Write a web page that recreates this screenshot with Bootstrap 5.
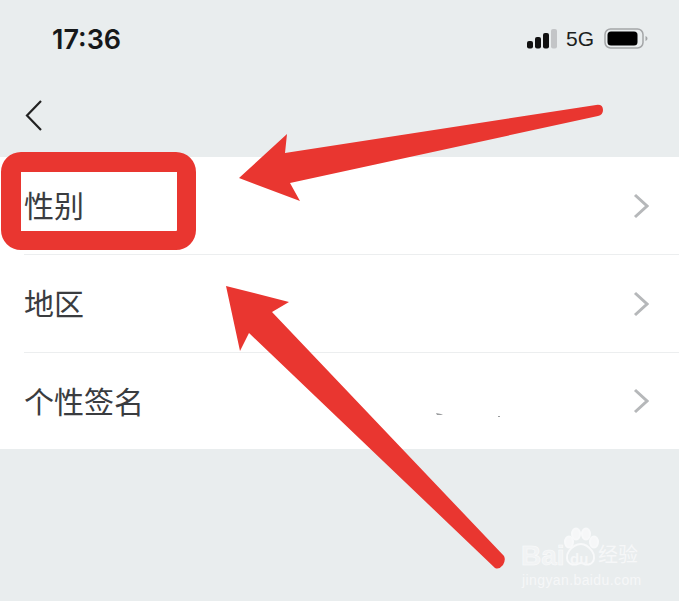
<!DOCTYPE html>
<html lang="zh-CN">

<head>
    <meta charset="UTF-8">
    <meta name="viewport" content="width=device-width, initial-scale=1.0">
    <title>个人信息</title>
    <link href="https://cdn.jsdelivr.net/npm/bootstrap@5.3.1/dist/css/bootstrap.min.css" rel="stylesheet">
    <style>
        body {
            margin: 0;
            background: #e9edee;
            overflow: hidden;
        }

        .phone-page {
            width: 679px;
            height: 601px;
            background: #e9edee;
        }

        .status-row {
            height: 72px;
            padding: 0 31px 0 52px;
        }

        .clock-text {
            font: 600 27px/1 Inter, "Liberation Sans", sans-serif;
            color: #16181a;
            margin-top: 6px;
        }

        .net-text {
            font: 400 21px/1 "Liberation Sans", sans-serif;
            color: #1c1e20;
            margin: 0 10px 0 9px;
        }

        .status-right {
            margin-top: 5px;
        }

        .back-row {
            height: 85px;
            padding-left: 24px;
        }

        .setting-row {
            padding-left: 24px;
            font: 400 30px/1 "Noto Sans CJK SC", sans-serif;
            color: #3a3c3f;
        }

        .setting-row + .setting-row .row-inner {
            border-top: 1px solid #eceeef;
        }

        .row-inner {
            height: 97px;
            padding-right: 30px;
        }

        .setting-row:nth-child(2) .row-inner {
            height: 98px;
        }

        .row-label {
            margin-top: -3px;
        }

        .mark-layer {
            position: absolute;
            left: 0;
            top: 0;
            pointer-events: none;
        }

        .red-box {
            position: absolute;
            left: 1px;
            top: 152px;
            width: 195px;
            height: 98px;
            border-style: solid;
            border-color: #e93630;
            border-width: 20px 19px 19px 20px;
            border-radius: 20px;
        }

        .red-box::before {
            content: "";
            position: absolute;
            inset: -1px;
            border: 1px solid #e93630;
        }

        .wm-box {
            position: absolute;
            left: 521px;
            top: 527px;
            width: 140px;
            line-height: 1;
            color: #f6f7f8;
        }

        .wm-bai {
            position: absolute;
            left: 0;
            top: 15px;
            font: 700 28px/1 "Liberation Sans", sans-serif;
            color: #f1f3f4;
            -webkit-text-stroke: .6px #fafbfb;
        }

        .wm-jy {
            position: absolute;
            left: 77px;
            top: 17px;
            font: 400 20px/1 "Noto Sans CJK SC", sans-serif;
        }

        .wm-url {
            position: absolute;
            left: 1px;
            top: 46px;
            font: 400 14px/1 "Liberation Sans", sans-serif;
            letter-spacing: .4px;
            white-space: nowrap;
        }

        .wm-du {
            position: absolute;
            left: 49px;
            top: 24px;
            font: 700 15px/1 "Liberation Sans", sans-serif;
            color: #f6f7f8;
        }
    </style>
</head>

<body>
    <div class="phone-page position-relative">
        <!-- barra de status -->
        <div class="status-row d-flex justify-content-between align-items-center">
            <span class="clock-text">17:36</span>
            <div class="status-right d-flex align-items-center">
                <svg width="30" height="20" viewBox="0 0 30 20">
                    <rect x="0" y="12" width="6" height="7.500" rx="2" fill="#111"/>
                    <rect x="8" y="8" width="6" height="11.500" rx="2" fill="#111"/>
                    <rect x="16" y="4" width="6" height="15.500" rx="2" fill="#111"/>
                    <rect x="24" y="0" width="6" height="19.500" rx="2" fill="#c3c5c7"/>
                </svg>
                <span class="net-text">5G</span>
                <svg width="44" height="22" viewBox="0 0 44 22">
                    <rect x="1" y="1" width="38" height="19" rx="5.500" fill="none" stroke="#a4a6a8" stroke-width="1.500"/>
                    <rect x="3.500" y="3.500" width="30" height="14" rx="3.500" fill="#000"/>
                    <path d="M41.500 8v5c1.200-.5 2-1.400 2-2.500s-.8-2-2-2.500z" fill="#a4a6a8"/>
                </svg>
            </div>
        </div>

        <div class="back-row d-flex align-items-center">
            <svg width="20" height="32" viewBox="0 0 20 32">
                <path d="M17 2 3 16.500 17 31" fill="none" stroke="#222" stroke-width="2.200"/>
            </svg>
        </div>

        <div class="bg-white">
            <div class="setting-row">
                <div class="row-inner d-flex justify-content-between align-items-center">
                    <span class="row-label">性别</span>
                    <svg width="16" height="26" viewBox="0 0 16 26"><path d="M2 2l12 11L2 24" fill="none" stroke="#b6b8ba" stroke-width="3"/></svg>
                </div>
            </div>
            <div class="setting-row">
                <div class="row-inner d-flex justify-content-between align-items-center">
                    <span class="row-label">地区</span>
                    <svg width="16" height="26" viewBox="0 0 16 26"><path d="M2 2l12 11L2 24" fill="none" stroke="#b6b8ba" stroke-width="3"/></svg>
                </div>
            </div>
            <div class="setting-row">
                <div class="row-inner d-flex justify-content-between align-items-center">
                    <span class="row-label">个性签名</span>
                    <svg width="16" height="26" viewBox="0 0 16 26"><path d="M2 2l12 11L2 24" fill="none" stroke="#b6b8ba" stroke-width="3"/></svg>
                </div>
            </div>
        </div>

        <!-- marcações vermelhas por cima da tela -->
        <div class="red-box"></div>
        <svg class="mark-layer" width="679" height="601" viewBox="0 0 679 601">
            <path d="M239 178 287 134 285 153 596 105Q603 104 603 110 603 115 598 116L290 183 300 201Z" fill="#e93630"/>
            <path d="M226 286 289 302 272 312 504 556Q506 560 503 565 499 570 495 568L249 333 240 351Z" fill="#e93630"/>
            <path d="M436 413l5 1 2 1-6 0zM498 416h2v1h-2z" fill="#9a9c9e"/>
        </svg>

        <!-- marca d'água -->
        <div class="wm-box">
            <span class="wm-bai">Bai</span>
            <svg class="position-absolute" style="left:41px;top:0" width="38" height="42" viewBox="0 0 38 42">
                <g fill="none" stroke="#f8f9fa" stroke-width="2">
                    <ellipse cx="7" cy="15" rx="4" ry="5.500" fill="#f6f7f8"/>
                    <ellipse cx="14" cy="7" rx="4" ry="5.500" fill="#f6f7f8"/>
                    <ellipse cx="24" cy="7" rx="4" ry="5.500" fill="#f6f7f8"/>
                    <ellipse cx="32" cy="15" rx="4" ry="5.500" fill="#f6f7f8"/>
                    <path d="M19 17c5 0 8 3 11 7s3 11-2 13-6-1-9-1-5 3-10 1-5-9-2-13 7-7 12-7z"/>
                </g>
            </svg>
            <span class="wm-du">du</span>
            <span class="wm-jy">经验</span>
            <span class="wm-url">jingyan.baidu.com</span>
        </div>
    </div>

    <script src="https://cdn.jsdelivr.net/npm/bootstrap@5.3.1/dist/js/bootstrap.bundle.min.js"></script>
</body>

</html>
